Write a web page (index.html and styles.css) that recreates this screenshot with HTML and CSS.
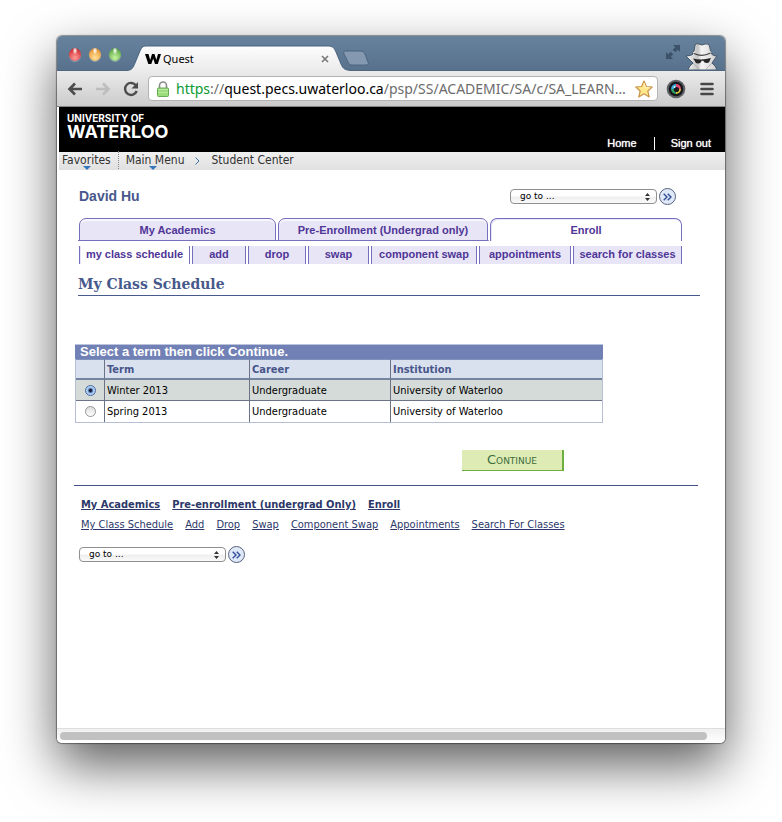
FILE: index.html
```html
<!DOCTYPE html>
<html lang="en">
<head>
<meta charset="utf-8">
<title>Quest</title>
<link rel="stylesheet" href="styles.css">
</head>
<body>
<div class="window">
  <header class="titlebar">
    <div class="lights">
      <button class="light red" aria-label="Close"></button>
      <button class="light amber" aria-label="Minimize"></button>
      <button class="light green" aria-label="Zoom"></button>
    </div>
    <div class="browser-tab">
      <svg class="tab-shape" viewBox="0 0 224 26" aria-hidden="true">
        <defs><linearGradient id="tabfill" x1="0" y1="0" x2="0" y2="1"><stop offset="0" stop-color="#fdfdfd"/><stop offset="1" stop-color="#ebebeb"/></linearGradient></defs>
        <path d="M0 25.500C5 25 6 23 8 18L13 6C15 2 16 1 20 1H201C206 1 207 3 209 7L214 19C216 24 218 25 224 25.500V26H0Z" fill="url(#tabfill)"/>
        <path d="M0 25.500C5 25 6 23 8 18L13 6C15 2 16 1 20 1H201C206 1 207 3 209 7L214 19C216 24 218 25 224 25.500" fill="none" stroke="#4a6480" stroke-width="1"/>
      </svg>
      <svg class="favicon" viewBox="0 0 16 12" aria-hidden="true"><path d="M0 1H3.500L5.200 7L7 1H9.500L11.300 7L13 1H16L12.800 11H10L8.200 5.500L6.300 11H3.300Z" fill="#000"/></svg>
      <span class="tab-title">Quest</span>
      <button class="tab-close" aria-label="Close tab"><svg viewBox="0 0 8 8" width="8" height="8"><path d="M1 1L7 7M7 1L1 7" stroke="#777" stroke-width="1.600"/></svg></button>
    </div>
    <button class="new-tab" aria-label="New tab"><svg viewBox="0 0 26 16" width="26" height="16"><path d="M3 1H17C20 1 21 2 22 4L25 12C26 14 25 15 23 15H9C7 15 6 14 5 12L1 4C0 2 1 1 3 1Z" fill="#8499af" stroke="#4c647e"/></svg></button>
    <div class="title-right">
      <svg class="expand" viewBox="0 0 14 14" aria-hidden="true"><path d="M7 0H14V7L11.800 4.800L9.300 7.300L6.700 4.700L9.200 2.200ZM0 7L2.200 9.200L4.700 6.700L7.300 9.300L4.800 11.800L7 14H0Z" fill="#3d526a"/></svg>
      <svg class="incognito" viewBox="0 0 34 28" aria-hidden="true">
        <defs><linearGradient id="coat"><stop offset="0" stop-color="#fafafa"/><stop offset=".38" stop-color="#c4c4c4"/><stop offset=".5" stop-color="#f4f4f4"/><stop offset="1" stop-color="#d0d0d0"/></linearGradient></defs>
        <path d="M9 9L10 3Q11 1 14 2L17 3L20 2Q24 1 24.500 4L25.500 9Q28 10 26.500 12Q28 14 32 14L29 18L27 21Q31 24 32 28H3Q4 24 8 21L5 18L1 14Q6 14 8 12Q6.500 10 9 9Z" fill="url(#coat)" stroke="#46586b" stroke-width="1"/>
        <path d="M9 11.500Q17 15.500 25.500 11" fill="none" stroke="#444" stroke-width="1.300"/>
        <path d="M8 16.500Q17 18.500 26 16L25 18Q24.500 21 22 21Q19 21 18.300 18.800H16.500Q16 21.500 13 21.500Q10 21 9.500 18.500Z" fill="#262626"/>
        <path d="M8 21L15 28M27 21L20 28" fill="none" stroke="#a4a4a4" stroke-width=".8"/>
      </svg>
    </div>
  </header>

  <div class="toolbar">
    <button class="nav" aria-label="Back"><svg viewBox="0 0 16 16" width="16" height="16"><path d="M15 8H3M8 2.500L2.500 8L8 13.500" fill="none" stroke="#4c4c4c" stroke-width="2.600"/></svg></button>
    <button class="nav" aria-label="Forward"><svg viewBox="0 0 16 16" width="16" height="16"><path d="M1 8H13M8 2.500L13.500 8L8 13.500" fill="none" stroke="#bdbdbd" stroke-width="2.600"/></svg></button>
    <button class="nav" aria-label="Reload"><svg viewBox="0 0 16 16" width="16" height="16"><path d="M13 4.500A6 6 0 1 0 13.700 10" fill="none" stroke="#4c4c4c" stroke-width="2.400"/><path d="M15 1V7.500H8.500Z" fill="#4c4c4c"/></svg></button>
    <div class="address">
      <svg class="lock" viewBox="0 0 12 16" width="12" height="16" aria-hidden="true"><path d="M2.500 8V4.500A3.500 3.500 0 0 1 9.500 4.500V8" fill="none" stroke="#8a8a8a" stroke-width="1.600"/><rect x=".5" y="7" width="11" height="8.500" rx="1" fill="#9bdc7c" stroke="#6aa956"/><path d="M1 8.500H11M1 11.500H11" stroke="#b8e99f"/></svg>
      <div class="url"><span class="secure">https</span><span class="dim">://</span>quest.pecs.uwaterloo.ca<span class="dim">/psp/SS/ACADEMIC/SA/c/SA_LEARN…</span></div>
      <button class="star" aria-label="Bookmark"><svg viewBox="0 0 18 18" width="18" height="18"><path d="M9 1L11.400 6.500L17.200 7L12.800 11L14.200 17L9 13.800L3.800 17L5.200 11L.8 7L6.600 6.500Z" fill="#ffe78c" stroke="#c9934a" stroke-width="1.200" stroke-linejoin="round"/><path d="M9 3L10.500 7.500L15 8" fill="none" stroke="#fff6c9"/></svg></button>
    </div>
    <button class="ext" aria-label="Camera extension"><svg viewBox="0 0 20 20" width="20" height="20"><circle cx="10" cy="10" r="9.300" fill="#5e6166"/><circle cx="10" cy="10" r="7.300" fill="#17181b"/><path d="M10 5A5 5 0 0 1 15 10H10Z" fill="#e84a74"/><path d="M15 10A5 5 0 0 1 10 15V10Z" fill="#d9c43f"/><path d="M10 15A5 5 0 0 1 5 10H10Z" fill="#2e9c62"/><path d="M5 10A5 5 0 0 1 10 5V10Z" fill="#35a7d6"/><circle cx="10.500" cy="10.500" r="2.600" fill="#16171c"/><circle cx="8.500" cy="8" r="1" fill="#d9f3ff"/></svg></button>
    <button class="ext" aria-label="Menu"><svg viewBox="0 0 14 14" width="14" height="14"><path d="M1.500 2H12.500M1.500 7H12.500M1.500 12H12.500" stroke="#474747" stroke-width="2.600" stroke-linecap="round"/></svg></button>
  </div>

  <div class="page">
    <div class="banner">
      <div class="logo"><span class="logo-small">UNIVERSITY OF</span><span class="logo-large">WATERLOO</span></div>
      <nav class="account"><a href="#">Home</a><a href="#">Sign out</a></nav>
    </div>
    <nav class="crumbs">
      <a class="menu" href="#">Favorites</a>
      <a class="menu divided" href="#">Main Menu</a>
      <svg class="chevron" viewBox="0 0 5 8" width="5" height="8" aria-hidden="true"><path d="M.5 .5L4 4L.5 7.500" fill="none" stroke="#3c6fa8"/></svg>
      <a href="#">Student Center</a>
    </nav>

    <main>
      <div class="person">
        <h1>David Hu</h1>
        <form class="goto">
          <span class="picker"><select aria-label="Go to"><option>go to ...</option></select><svg viewBox="0 0 5 8" width="5" height="8" aria-hidden="true"><path d="M0 3L2.500 0L5 3ZM0 5H5L2.500 8Z" fill="#333"/></svg></span>
          <button type="button" class="go" aria-label="Go"><svg viewBox="0 0 9 8" width="9" height="8"><path d="M.7 .7L4 4L.7 7.300M4.700 .7L8 4L4.700 7.300" fill="none" stroke="#35509a" stroke-width="1.400"/></svg></button>
        </form>
      </div>

      <nav class="tabs">
        <a href="#">My Academics</a>
        <a href="#">Pre-Enrollment (Undergrad only)</a>
        <a href="#" class="active">Enroll</a>
      </nav>
      <nav class="subtabs">
        <a href="#" class="active">my class schedule</a>
        <a href="#">add</a>
        <a href="#">drop</a>
        <a href="#">swap</a>
        <a href="#">component swap</a>
        <a href="#">appointments</a>
        <a href="#">search for classes</a>
      </nav>

      <h2>My Class Schedule</h2>

      <table>
        <caption>Select a term then click Continue.</caption>
        <colgroup><col class="c-pick"><col class="c-term"><col class="c-career"><col></colgroup>
        <thead><tr><th></th><th>Term</th><th>Career</th><th>Institution</th></tr></thead>
        <tbody>
          <tr class="picked"><td><input type="radio" name="term" id="winter" checked></td><td><label for="winter">Winter 2013</label></td><td>Undergraduate</td><td>University of Waterloo</td></tr>
          <tr><td><input type="radio" name="term" id="spring"></td><td><label for="spring">Spring 2013</label></td><td>Undergraduate</td><td>University of Waterloo</td></tr>
        </tbody>
      </table>
      <div class="actions"><button type="button" class="continue">Continue</button></div>

      <footer>
        <nav class="links strong"><a href="#">My Academics</a><a href="#">Pre-enrollment (undergrad Only)</a><a href="#">Enroll</a></nav>
        <nav class="links"><a href="#">My Class Schedule</a><a href="#">Add</a><a href="#">Drop</a><a href="#">Swap</a><a href="#">Component Swap</a><a href="#">Appointments</a><a href="#">Search For Classes</a></nav>
        <form class="goto">
          <span class="picker"><select aria-label="Go to"><option>go to ...</option></select><svg viewBox="0 0 5 8" width="5" height="8" aria-hidden="true"><path d="M0 3L2.500 0L5 3ZM0 5H5L2.500 8Z" fill="#333"/></svg></span>
          <button type="button" class="go" aria-label="Go"><svg viewBox="0 0 9 8" width="9" height="8"><path d="M.7 .7L4 4L.7 7.300M4.700 .7L8 4L4.700 7.300" fill="none" stroke="#35509a" stroke-width="1.400"/></svg></button>
        </form>
      </footer>
    </main>
  </div>
  <div class="scrollbar"><div class="thumb"></div></div>
</div>
</body>
</html>
```
FILE: styles.css
```css
* { box-sizing: border-box; }

body {
  margin: 0;
  min-height: 100vh;
  padding: 36px 57px 79px 57px;
  display: flex;
  background: #fff;
  color: #000;
  font: 11px/14px "DejaVu Sans Condensed", "DejaVu Sans", sans-serif;
}

a { color: inherit; text-decoration: none; }
button { padding: 0; border: 0; background: none; font: inherit; }
svg { display: block; }

.window {
  flex: 1;
  min-width: 0;
  display: flex;
  flex-direction: column;
  border-radius: 5px;
  background: #fff;
  box-shadow: 0 0 1px 1px rgba(0, 0, 0, .4), 0 22px 52px rgba(0, 0, 0, .64);
}

/* Browser chrome */
.titlebar {
  height: 35px;
  display: flex;
  align-items: flex-end;
  border-radius: 5px 5px 0 0;
  background: linear-gradient(#67829d, #58728e);
  border-bottom: 1px solid #506780;
}
.lights { display: flex; gap: 8px; padding: 0 0 9px 12px; }
.light {
  width: 12px;
  height: 13px;
  border-radius: 50%;
  box-shadow: 0 1px 0 rgba(255, 255, 255, .3);
}
.red { background: radial-gradient(ellipse at 50% 20%, rgba(255, 255, 255, .8) 0 8%, transparent 28%), radial-gradient(circle at 50% 75%, #ff9d99, #dc4346 60%, #9c2d31); }
.amber { background: radial-gradient(ellipse at 50% 20%, rgba(255, 255, 255, .8) 0 8%, transparent 28%), radial-gradient(circle at 50% 75%, #ffe29a, #eda548 60%, #9c6a33); }
.green { background: radial-gradient(ellipse at 50% 20%, rgba(255, 255, 255, .8) 0 8%, transparent 28%), radial-gradient(circle at 50% 75%, #c9f5a4, #72b857 60%, #42763b); }

.browser-tab {
  position: relative;
  flex: 0 0 224px;
  height: 26px;
  margin: 0 0 -1px 6px;
  padding: 2px 22px 0 18px;
  display: flex;
  align-items: center;
}
.tab-shape { position: absolute; inset: 0; width: 100%; height: 26px; }
.favicon, .tab-title, .tab-close { position: relative; }
.favicon { width: 16px; height: 12px; }
.tab-title { flex: 1; padding-left: 2px; font: 11px/16px "Noto Sans", sans-serif; }
.new-tab { margin: 0 0 4px -8px; }
.title-right { margin-left: auto; padding-right: 6px; display: flex; align-items: flex-end; gap: 5px; }
.expand { width: 14px; height: 14px; margin-bottom: 11px; }
.incognito { width: 34px; height: 28px; }

.toolbar {
  height: 36px;
  padding: 0 11px 0 10px;
  display: flex;
  align-items: center;
  background: linear-gradient(#ebebeb, #cbcbcb);
  border-bottom: 1px solid #858585;
}
.nav { margin-right: 12px; }
.nav:nth-child(3) { margin-right: 9px; }
.address {
  flex: 1;
  min-width: 0;
  height: 25px;
  padding: 0 4px 0 8px;
  display: flex;
  align-items: center;
  border: 1px solid #b3b3b3;
  border-radius: 4px;
  background: #fff;
}
.url {
  flex: 1;
  min-width: 0;
  overflow: hidden;
  padding-left: 7px;
  white-space: nowrap;
  font: 14px/20px "Noto Sans", sans-serif;
}
.secure { color: #0b9a33; }
.dim { color: #6c6c6c; }
.ext { margin-left: 8px; }
.ext:last-child { margin-left: 14px; }

/* Site header */
.page { flex: 1; padding-left: 2px; }
.banner {
  height: 45px;
  padding: 6px 14px 0 8px;
  display: flex;
  justify-content: space-between;
  background: #000;
  color: #fff;
}
.logo { display: flex; flex-direction: column; font-family: Inter, sans-serif; }
.logo-small { font-size: 10px; line-height: 11px; font-weight: 700; }
.logo-large { font-size: 18px; line-height: 16px; font-weight: 700; }
.account {
  display: flex;
  align-self: flex-end;
  padding-bottom: 2px;
  font: 11px/13px "Liberation Sans", sans-serif;
  text-shadow: 0 0 1px #fff;
}
.account a + a { margin-left: 17px; padding-left: 16px; border-left: 1px solid #fff; }

.crumbs {
  height: 18px;
  padding-left: 3px;
  display: flex;
  align-items: center;
  background: linear-gradient(#f0f0f0, #e0e0e0);
  color: #333;
  font-size: 12px;
  line-height: 18px;
}
.crumbs a { margin-top: -2px; }
.crumbs .menu { position: relative; }
.crumbs .menu::after {
  content: "";
  position: absolute;
  left: 50%;
  bottom: -1px;
  margin-left: -3px;
  border: 4px solid transparent;
  border-top-color: #3577bb;
  border-bottom: 0;
}
.crumbs .divided { margin-left: 7px; padding-left: 7px; border-left: 1px dotted #888; }
.chevron { margin: 0 12px 0 10px; }

/* Student center */
main { padding: 18px 25px 24px 19px; }
.person { display: flex; justify-content: space-between; padding-right: 24px; }
h1 { margin: 0 0 0 1px; font: bold 14px/17px "Liberation Sans", sans-serif; color: #48578c; }
.goto { display: flex; align-items: center; gap: 2px; }
.picker { position: relative; }
.picker select {
  display: block;
  width: 147px;
  height: 15px;
  padding: 0 9px;
  appearance: none;
  border: 1px solid #8f8f8f;
  border-radius: 4px;
  background: linear-gradient(#fff, #fff 45%, #efefef 55%, #fafafa);
  color: #000;
  font: 9px/13px "DejaVu Sans", sans-serif;
}
.picker svg { position: absolute; right: 7px; top: 4px; pointer-events: none; }
.go {
  width: 17px;
  height: 17px;
  display: grid;
  place-items: center;
  border: 1px solid #58617c;
  border-radius: 50%;
  background: #dfe9f8;
}

.tabs, .subtabs {
  display: grid;
  margin-right: 18px;
  font: bold 11px/16px "Liberation Sans", sans-serif;
  color: #4f3697;
  text-align: center;
}
.tabs {
  grid-template-columns: 197fr 210fr 192fr;
  column-gap: 2px;
  margin-top: 13px;
  padding-left: 1px;
  background: linear-gradient(#766fbd, #766fbd) 0 100% / 68% 1px no-repeat;
}
.tabs a {
  height: 23px;
  padding-top: 3px;
  border: 1px solid #766fbd;
  border-radius: 7px 7px 0 0;
  background: #e8e5f6;
  box-shadow: inset 0 2px 0 #f8f7fd;
}
.tabs .active { background: #fff; border-bottom: 0; box-shadow: inset 1px 1px 0 #e8e5f6; }
.subtabs {
  grid-template-columns: 111fr 54fr 58fr 61fr 106fr 92fr 109fr;
  column-gap: 2px;
  margin-top: 5px;
  padding-left: 1px;
}
.subtabs a {
  height: 18px;
  border: solid #766fbd;
  border-width: 0 1px;
  background: #e8e5f6;
  white-space: nowrap;
}
.subtabs .active { background: #fff; box-shadow: inset 1px 0 0 #e8e5f6; }

h2 {
  margin: 11px 0 0;
  padding-bottom: 2px;
  border-bottom: 1px solid #465a8c;
  color: #48598b;
  font: bold 14px/18px "DejaVu Serif", serif;
}

table {
  width: 100%;
  max-width: 528px;
  margin: 48px 0 0 -3px;
  table-layout: fixed;
  border-spacing: 0;
  border: 1px solid #b6bed6;
  border-top: 0;
}
caption {
  height: 15px;
  padding-left: 5px;
  border-top: 1px solid #bcc4dd;
  background: #7181b5;
  color: #fff;
  text-align: left;
  font: bold 13px/14px "Liberation Sans", sans-serif;
}
.c-pick { width: 28px; }
.c-term { width: 145px; }
.c-career { width: 141px; }
th, td { height: 22px; padding: 1px 2px 0; text-align: left; border-top: 1px solid #6d7387; }
th { height: 19px; background: #dae1ee; color: #47568b; border-top-color: #7d93be; }
th + th, td + td { border-left: 1px solid #6d7387; }
.picked td { background: #d5dbd8; border-top: 2px solid #75849f; }
td:first-child { padding-top: 0; text-align: center; }
input[type="radio"] {
  display: block;
  width: 11px;
  height: 11px;
  margin: 0 auto;
  appearance: none;
  border: 1px solid #949494;
  border-radius: 50%;
  background: linear-gradient(#ddd, #fff);
}
input[type="radio"]:checked {
  border-color: #4a67a2;
  background: radial-gradient(circle, #101c3d 0 1px, #9fc6f3 3px, #d3e9ff);
}

.actions { max-width: 486px; margin-top: 27px; display: flex; justify-content: flex-end; }
.continue {
  width: 102px;
  height: 21px;
  border: solid #6bb03f;
  border-width: 0 2px 1px 0;
  background: #deebb5;
  color: #3d6b3c;
  font: 13px/18px "DejaVu Sans", sans-serif;
  font-variant: small-caps;
}

footer { margin: 14px 2px 0 -4px; padding: 12px 0 0 5px; border-top: 1px solid #47508a; }
.links { display: flex; gap: 12px; margin: 0 0 6px 2px; color: #2c3869; }
.links a { text-decoration: underline; }
.strong { font-weight: bold; }
footer .goto { margin-top: 14px; }

.scrollbar {
  height: 15px;
  padding: 3px 18px 0 3px;
  border-top: 1px solid #dedede;
  border-radius: 0 0 5px 5px;
  background: linear-gradient(#f0f0f0, #fff);
}
.thumb { height: 8px; border-radius: 4px; background: #c1c1c1; }
```
